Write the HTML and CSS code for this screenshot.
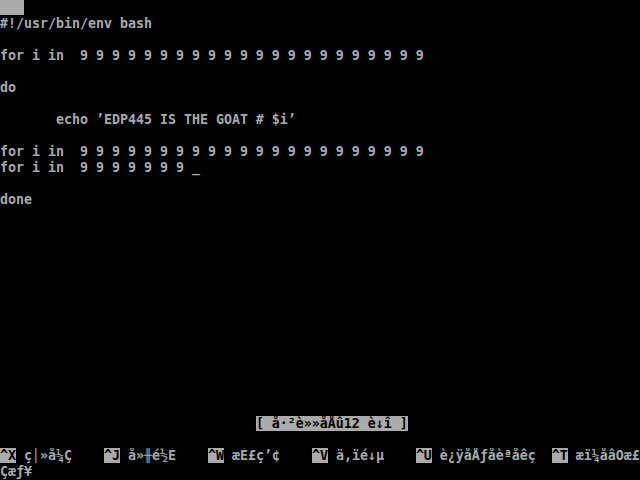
FILE: index.html
```html
<!DOCTYPE html>
<html lang="en">
<head>
    <meta charset="UTF-8">
    <meta name="viewport" content="width=device-width, initial-scale=1.0">
    <title>nano</title>
    <link rel="stylesheet" href="styles.css">
</head>
<body>
    <div class="screen">
        <div class="line"><span class="rev">   </span></div>
        <div class="line">#!/usr/bin/env bash</div>
        <div class="line"></div>
        <div class="line">for i in  9 9 9 9 9 9 9 9 9 9 9 9 9 9 9 9 9 9 9 9 9 9</div>
        <div class="line"></div>
        <div class="line">do</div>
        <div class="line"></div>
        <div class="line">       echo ’EDP445 IS THE GOAT # $i’</div>
        <div class="line"></div>
        <div class="line">for i in  9 9 9 9 9 9 9 9 9 9 9 9 9 9 9 9 9 9 9 9 9 9</div>
        <div class="line">for i in  9 9 9 9 9 9 9 _</div>
        <div class="line"></div>
        <div class="line">done</div>
        <div class="line"></div>
        <div class="line"></div>
        <div class="line"></div>
        <div class="line"></div>
        <div class="line"></div>
        <div class="line"></div>
        <div class="line"></div>
        <div class="line"></div>
        <div class="line"></div>
        <div class="line"></div>
        <div class="line"></div>
        <div class="line"></div>
        <div class="line"></div>
        <!-- status bar -->
        <div class="line">                                <span class="rev">[ å·²è»»åÅû12 è↓î ]</span></div>
        <div class="line"></div>
        <!-- shortcut list -->
        <div class="line"><span class="rev">^X</span> ç│»å¼Ç    <span class="rev">^J</span> å»╫é½É    <span class="rev">^W</span> æÉ£ç’¢    <span class="rev">^V</span> ä,ïé↓µ    <span class="rev">^U</span> è¿ÿåÅƒåèªåêç  <span class="rev">^T</span> æï¼åâÖæ£</div>
        <div class="line">Çæƒ¥</div>
    </div>
</body>
</html>
```

FILE: styles.css
```css
* {
    margin: 0;
    padding: 0;
    box-sizing: border-box;
}

html, body {
    background-color: #000;
}

body {
    width: 640px;
    height: 480px;
    overflow: hidden;
}

.screen {
    font-family: "DejaVu Sans Mono", "Liberation Mono", monospace;
    font-size: 13.29px;
    font-weight: bold;
    color: #aaaaaa;
}

.line {
    height: 16px;
    line-height: 16px;
    white-space: pre;
    overflow: hidden;
}

.rev {
    background-color: #aaaaaa;
    color: #000;
}
```
